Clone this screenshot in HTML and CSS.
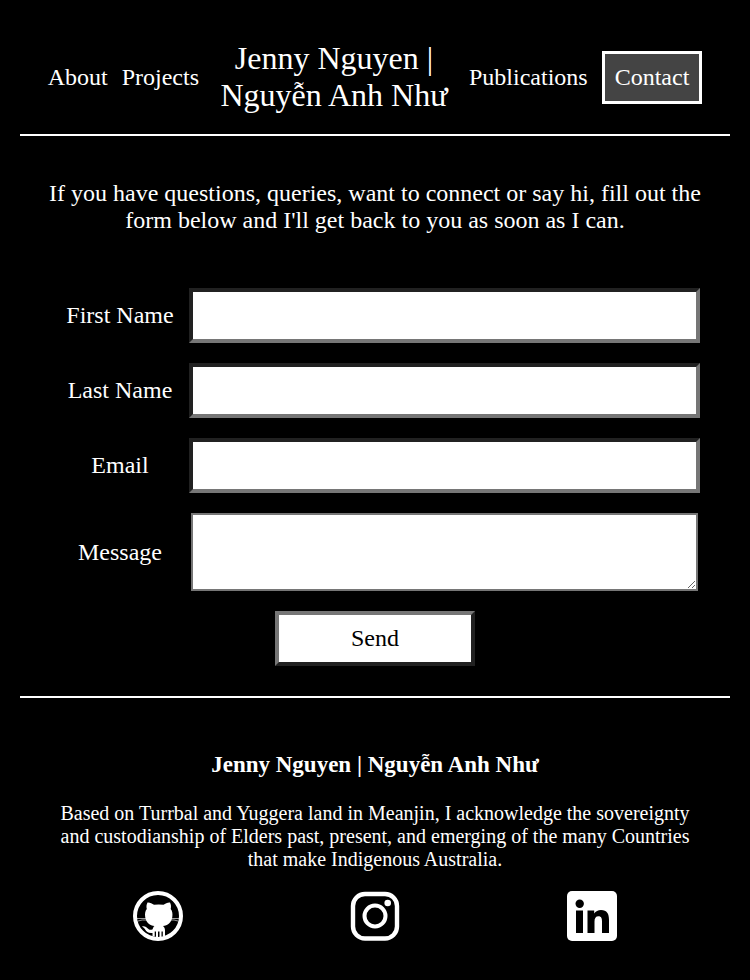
FILE: index.html
```html
<!DOCTYPE html>
<html lang="en">
<head>
<meta charset="utf-8">
<meta name="viewport" content="width=device-width, initial-scale=1">
<title>Contact | Jenny Nguyen</title>
<link rel="stylesheet" href="styles.css">
</head>
<body>
<header class="site-header">
  <nav class="nav-group"><a href="#about">About</a><a href="#projects">Projects</a></nav>
  <h1 class="site-title">Jenny Nguyen | Nguyễn Anh Như</h1>
  <nav class="nav-group"><a href="#publications">Publications</a><a class="current" href="#contact">Contact</a></nav>
</header>
<main class="contact">
  <p class="intro">If you have questions, queries, want to connect or say hi, fill out the form below and I'll get back to you as soon as I can.</p>
  <form class="contact-form">
    <div class="field"><label for="first">First Name</label><input id="first" type="text"></div>
    <div class="field"><label for="last">Last Name</label><input id="last" type="text"></div>
    <div class="field"><label for="email">Email</label><input id="email" type="email"></div>
    <div class="field"><label for="message">Message</label><textarea id="message"></textarea></div>
    <button type="submit">Send</button>
  </form>
</main>
<footer class="site-footer">
  <h2>Jenny Nguyen | Nguyễn Anh Như</h2>
  <p>Based on Turrbal and Yuggera land in Meanjin, I acknowledge the sovereignty and custodianship of Elders past, present, and emerging of the many Countries that make Indigenous Australia.</p>
  <div class="social">
    <a href="#github" aria-label="GitHub">
      <svg viewBox="0 0 50 50"><circle cx="25" cy="25" r="23" fill="none" stroke="#fff" stroke-width="4"/><path fill="#fff" d="M14.500 11.500C17 11.300 19 12.400 21 13.800Q25.700 13 30.500 13.800C32.500 12.400 34.500 11.300 37 11.500C38.200 13.800 38.200 16 37.700 18C39.300 20 39.800 22.500 39.300 26C38.500 32 34.500 34.500 30 35C31.500 36 32 38 32 39.500V45.500H29.800V40.500H28.500V46.500H26.500V40.500H25V46.500H23V40.500H21.700V45.500H19.500V42C15.500 42.500 13.500 41 12.300 38.800C11.500 37.300 10.500 36.500 9 35.500C12 34.800 13.500 36.300 14.800 37.600C16.300 39.200 17.800 39 19.700 38.300C19.900 36.900 20.500 35.700 21.500 35C17 34.500 13 32 12.200 26C11.700 22.500 12.200 20 13.800 18C13.300 16 13.300 13.800 14.500 11.500Z"/><path d="M4 27.500h9M5 30q4-1.500 9-1M46 27.500h-9M45 30q-4-1.500-8-1" stroke="#fff" stroke-width=".6" fill="none"/></svg>
    </a>
    <a href="#instagram" aria-label="Instagram">
      <svg viewBox="0 0 50 50"><rect x="3" y="3" width="44" height="44.500" rx="12" fill="none" stroke="#fff" stroke-width="4.400"/><circle cx="25" cy="25" r="10.500" fill="none" stroke="#fff" stroke-width="4"/><circle cx="37.700" cy="12" r="3.300" fill="#fff"/></svg>
    </a>
    <a href="#linkedin" aria-label="LinkedIn">
      <svg viewBox="0 0 50 50"><rect width="50" height="50" rx="5" fill="#fff"/><circle cx="12.700" cy="12.700" r="4.200"/><path d="M9 19.500h7V42H9zM20.500 19.500h6.700v3c1.500-2.300 3.800-3.600 6.800-3.600 6 0 8 3.700 8 10V42h-7V30.500c0-3.200-.7-5.300-3.500-5.300s-4 2-4 5.300V42h-7z"/></svg>
    </a>
  </div>
</footer>
</body>
</html>
```

FILE: styles.css
```css
* {
  box-sizing: border-box;
}

body {
  margin: 0;
  padding: 20px;
  background: #000;
  color: #fff;
  font-family: "Liberation Serif", "Times New Roman", serif;
  font-size: 24px;
  line-height: 27px;
}

a {
  color: inherit;
  text-decoration: none;
}

.site-header {
  display: flex;
  justify-content: center;
  align-items: center;
  gap: 21px;
  padding: 20px 0;
  border-bottom: 2px solid #fff;
}

.nav-group {
  display: flex;
  align-items: center;
  gap: 14px;
}

.site-title {
  max-width: 228px;
  margin: 0;
  font-size: 32px;
  font-weight: 400;
  line-height: 37px;
  text-align: center;
}

.current {
  padding: 10px;
  border: 3px solid #fff;
  background: #444;
}

.contact {
  padding: 44px 28px 30px;
  border-bottom: 2px solid #fff;
}

.intro {
  margin: 0 0 54px;
  text-align: center;
}

.contact-form {
  display: flex;
  flex-direction: column;
  gap: 20px;
}

.field {
  display: grid;
  grid-template-columns: 141px 1fr;
  align-items: center;
  padding-right: 2px;
}

.field label {
  padding-left: 3px;
  text-align: center;
}

.field input,
.contact-form button {
  height: 55px;
  padding: 10px;
  border: 4px solid;
  border-radius: 0;
  background: #fff;
  color: #000;
  font: inherit;
}

.field input {
  width: 100%;
  border-color: #212121 #767676 #767676 #212121;
}

.field textarea {
  display: block;
  height: 78px;
  margin: 0 2px;
  padding: 10px;
  border: 2px solid #767676;
  border-radius: 0;
  background: #fff;
  font: inherit;
}

.contact-form button {
  align-self: center;
  width: 200px;
  border-color: #767676 #212121 #212121 #767676;
}

.site-footer {
  padding: 53px 30px 18px;
  text-align: center;
}

.site-footer h2 {
  margin: 0 0 24px;
  font-size: 23px;
}

.site-footer p {
  margin: 0 0 20px;
  font-size: 20px;
  line-height: 23px;
}

.social {
  display: flex;
  justify-content: space-around;
}

.social svg {
  display: block;
  width: 50px;
  height: 50px;
}
```
